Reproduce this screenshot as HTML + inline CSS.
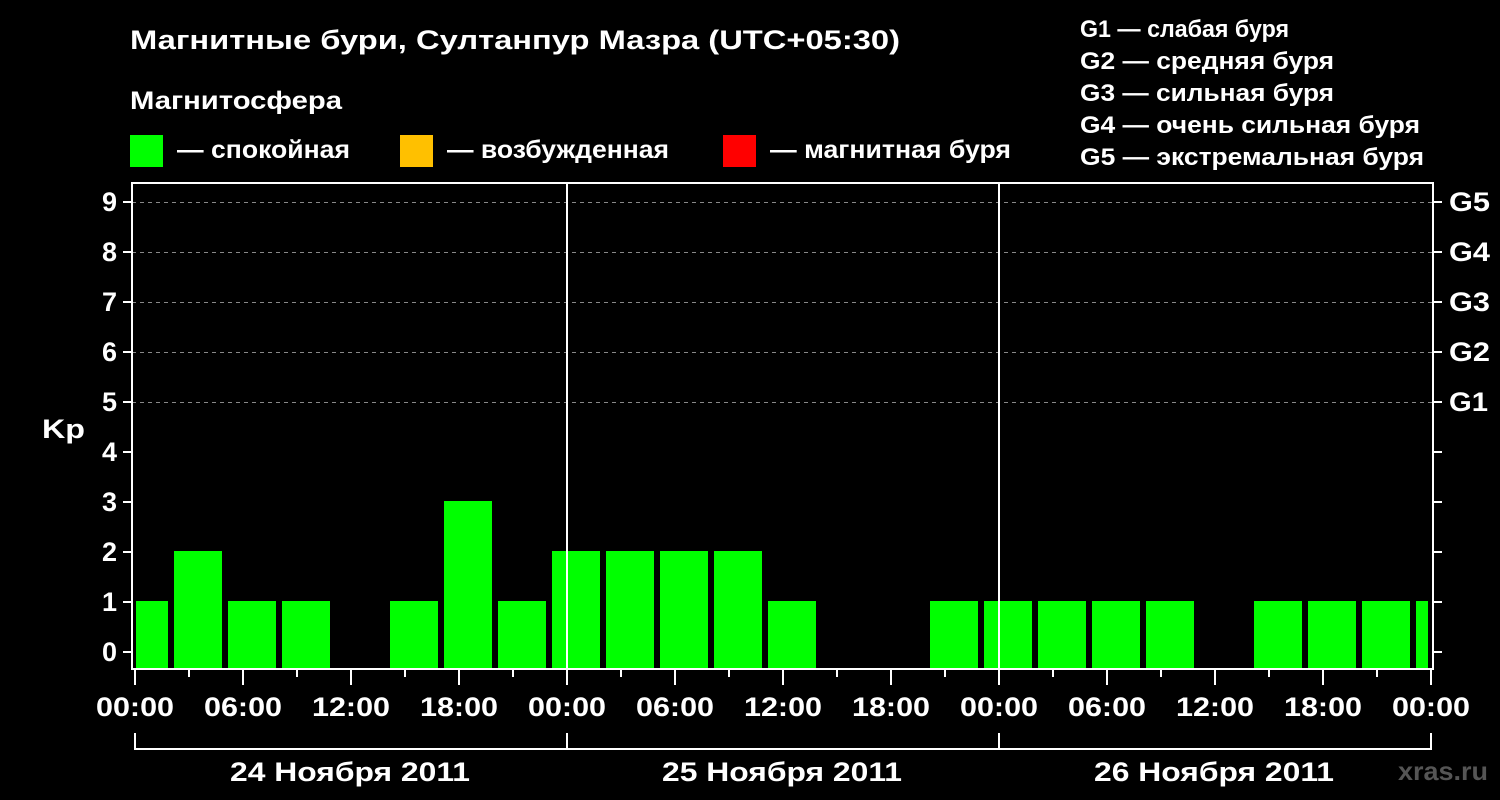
<!DOCTYPE html>
<html><head><meta charset="utf-8"><style>
html,body{margin:0;padding:0;background:#000;width:1500px;height:800px;overflow:hidden}
svg text{font-family:"Liberation Sans",Arial,sans-serif;font-weight:bold;fill:#fff}
</style></head><body>
<svg width="1500" height="800" viewBox="0 0 1500 800" xmlns="http://www.w3.org/2000/svg">
<rect width="1500" height="800" fill="#000"/>
<text x="130" y="49" font-size="27" textLength="770" lengthAdjust="spacingAndGlyphs">Магнитные бури, Султанпур Мазра (UTC+05:30)</text>
<text x="130" y="109" font-size="25" textLength="212" lengthAdjust="spacingAndGlyphs">Магнитосфера</text>
<rect x="130" y="135" width="33" height="32" fill="#00ff00"/>
<text x="177" y="158" font-size="25" textLength="173" lengthAdjust="spacingAndGlyphs">— спокойная</text>
<rect x="400" y="135" width="33" height="32" fill="#ffc000"/>
<text x="447" y="158" font-size="25" textLength="222" lengthAdjust="spacingAndGlyphs">— возбужденная</text>
<rect x="723" y="135" width="33" height="32" fill="#ff0000"/>
<text x="770" y="158" font-size="25" textLength="241" lengthAdjust="spacingAndGlyphs">— магнитная буря</text>
<g font-size="24" lengthAdjust="spacingAndGlyphs">
<text x="1080" y="37" textLength="209" lengthAdjust="spacingAndGlyphs">G1 — слабая буря</text>
<text x="1080" y="69" textLength="254" lengthAdjust="spacingAndGlyphs">G2 — средняя буря</text>
<text x="1080" y="101" textLength="254" lengthAdjust="spacingAndGlyphs">G3 — сильная буря</text>
<text x="1080" y="133" textLength="340" lengthAdjust="spacingAndGlyphs">G4 — очень сильная буря</text>
<text x="1080" y="165" textLength="344" lengthAdjust="spacingAndGlyphs">G5 — экстремальная буря</text>
</g>
<g stroke="#888" stroke-width="1" stroke-dasharray="4,4">
<line x1="132" y1="202.5" x2="1432" y2="202.5"/>
<line x1="132" y1="252.5" x2="1432" y2="252.5"/>
<line x1="132" y1="302.5" x2="1432" y2="302.5"/>
<line x1="132" y1="352.5" x2="1432" y2="352.5"/>
<line x1="132" y1="402.5" x2="1432" y2="402.5"/>
</g>
<g fill="#00ff00">
<rect x="136" y="601" width="32" height="67"/>
<rect x="174" y="551" width="48" height="117"/>
<rect x="228" y="601" width="48" height="67"/>
<rect x="282" y="601" width="48" height="67"/>
<rect x="390" y="601" width="48" height="67"/>
<rect x="444" y="501" width="48" height="167"/>
<rect x="498" y="601" width="48" height="67"/>
<rect x="552" y="551" width="48" height="117"/>
<rect x="606" y="551" width="48" height="117"/>
<rect x="660" y="551" width="48" height="117"/>
<rect x="714" y="551" width="48" height="117"/>
<rect x="768" y="601" width="48" height="67"/>
<rect x="930" y="601" width="48" height="67"/>
<rect x="984" y="601" width="48" height="67"/>
<rect x="1038" y="601" width="48" height="67"/>
<rect x="1092" y="601" width="48" height="67"/>
<rect x="1146" y="601" width="48" height="67"/>
<rect x="1254" y="601" width="48" height="67"/>
<rect x="1308" y="601" width="48" height="67"/>
<rect x="1362" y="601" width="48" height="67"/>
<rect x="1416" y="601" width="12" height="67"/>
</g>
<g stroke="#fff" stroke-width="2" fill="none">
<rect x="132" y="183" width="1301" height="486"/>
<line x1="567" y1="183" x2="567" y2="669"/>
<line x1="999" y1="183" x2="999" y2="669"/>
</g>
<g stroke="#fff" stroke-width="2">
<line x1="123" y1="202" x2="131" y2="202"/><line x1="123" y1="252" x2="131" y2="252"/>
<line x1="123" y1="302" x2="131" y2="302"/><line x1="123" y1="352" x2="131" y2="352"/>
<line x1="123" y1="402" x2="131" y2="402"/><line x1="123" y1="452" x2="131" y2="452"/>
<line x1="123" y1="502" x2="131" y2="502"/><line x1="123" y1="552" x2="131" y2="552"/>
<line x1="123" y1="602" x2="131" y2="602"/><line x1="123" y1="652" x2="131" y2="652"/>
<line x1="1434" y1="202" x2="1442" y2="202"/><line x1="1434" y1="252" x2="1442" y2="252"/>
<line x1="1434" y1="302" x2="1442" y2="302"/><line x1="1434" y1="352" x2="1442" y2="352"/>
<line x1="1434" y1="402" x2="1442" y2="402"/><line x1="1434" y1="452" x2="1442" y2="452"/>
<line x1="1434" y1="502" x2="1442" y2="502"/><line x1="1434" y1="552" x2="1442" y2="552"/>
<line x1="1434" y1="602" x2="1442" y2="602"/><line x1="1434" y1="652" x2="1442" y2="652"/>
</g>
<g font-size="27" text-anchor="end">
<text x="117" y="211">9</text><text x="117" y="261">8</text><text x="117" y="311">7</text>
<text x="117" y="361">6</text><text x="117" y="411">5</text><text x="117" y="461">4</text>
<text x="117" y="511">3</text><text x="117" y="561">2</text><text x="117" y="611">1</text>
<text x="117" y="661">0</text>
</g>
<text x="42" y="438" font-size="27" textLength="43" lengthAdjust="spacingAndGlyphs">Kp</text>
<g font-size="27">
<text x="1449" y="211" textLength="41" lengthAdjust="spacingAndGlyphs">G5</text><text x="1449" y="261" textLength="41" lengthAdjust="spacingAndGlyphs">G4</text><text x="1449" y="311" textLength="41" lengthAdjust="spacingAndGlyphs">G3</text>
<text x="1449" y="361" textLength="41" lengthAdjust="spacingAndGlyphs">G2</text><text x="1449" y="411" textLength="39" lengthAdjust="spacingAndGlyphs">G1</text>
</g>
<g stroke="#fff" stroke-width="2">
<path d="M135 670V685M189 670V677M243 670V685M297 670V677M351 670V685M405 670V677M459 670V685M513 670V677M567 670V685M621 670V677M675 670V685M729 670V677M783 670V685M837 670V677M891 670V685M945 670V677M999 670V685M1053 670V677M1107 670V685M1161 670V677M1215 670V685M1269 670V677M1323 670V685M1377 670V677M1431 670V685"/>
<path d="M135 733V749H1431V733M567 733V749M999 733V749" fill="none"/>
</g>
<g font-size="27">
<text x="96" y="716" textLength="78" lengthAdjust="spacingAndGlyphs">00:00</text>
<text x="204" y="716" textLength="78" lengthAdjust="spacingAndGlyphs">06:00</text>
<text x="312" y="716" textLength="78" lengthAdjust="spacingAndGlyphs">12:00</text>
<text x="420" y="716" textLength="78" lengthAdjust="spacingAndGlyphs">18:00</text>
<text x="528" y="716" textLength="78" lengthAdjust="spacingAndGlyphs">00:00</text>
<text x="636" y="716" textLength="78" lengthAdjust="spacingAndGlyphs">06:00</text>
<text x="744" y="716" textLength="78" lengthAdjust="spacingAndGlyphs">12:00</text>
<text x="852" y="716" textLength="78" lengthAdjust="spacingAndGlyphs">18:00</text>
<text x="960" y="716" textLength="78" lengthAdjust="spacingAndGlyphs">00:00</text>
<text x="1068" y="716" textLength="78" lengthAdjust="spacingAndGlyphs">06:00</text>
<text x="1176" y="716" textLength="78" lengthAdjust="spacingAndGlyphs">12:00</text>
<text x="1284" y="716" textLength="78" lengthAdjust="spacingAndGlyphs">18:00</text>
<text x="1392" y="716" textLength="78" lengthAdjust="spacingAndGlyphs">00:00</text>
<text x="230" y="781" textLength="240" lengthAdjust="spacingAndGlyphs">24 Ноября 2011</text>
<text x="662" y="781" textLength="240" lengthAdjust="spacingAndGlyphs">25 Ноября 2011</text>
<text x="1094" y="781" textLength="240" lengthAdjust="spacingAndGlyphs">26 Ноября 2011</text>
</g>
<text x="1398" y="780" font-size="26" style="fill:#555" textLength="90" lengthAdjust="spacingAndGlyphs">xras.ru</text>
</svg>
</body></html>
